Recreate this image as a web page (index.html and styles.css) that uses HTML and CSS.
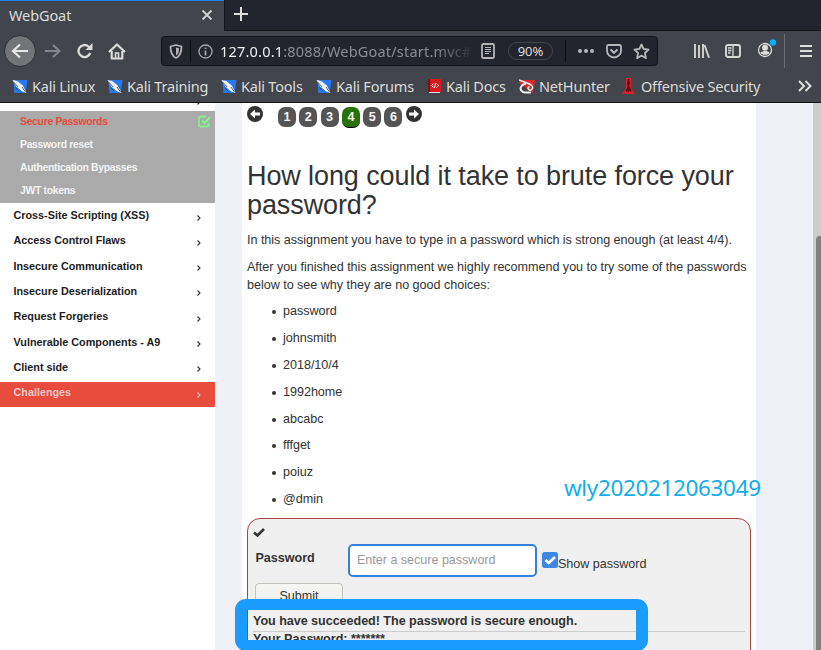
FILE: index.html
```html
<!DOCTYPE html>
<html lang="en">
<head>
<meta charset="utf-8">
<title>WebGoat</title>
<link rel="stylesheet" href="styles.css">
</head>
<body>
<svg class="defs" width="0" height="0">
  <symbol id="dragon" viewBox="0 0 16 16"><path d="M1 1H16L14 15H2Z" fill="#2878f5"/><path d="M0 1L5 2L11 7L15 15L10 13L4 8Z" fill="#f3f3f3"/><path d="M1 3L6 8.500M10 8.500L14 14M3 9L7 13" stroke="#34445c" stroke-width=".9"/></symbol>
  <symbol id="chev" viewBox="0 0 6 8"><path d="M1.500 1.500L4 4L1.500 6.500" fill="none" stroke="currentColor" stroke-width="1.100"/></symbol>
</svg>
<div class="screen">
  <header class="browser">
    <div class="tabs">
      <div class="tab"><span class="tab-title">WebGoat</span>
        <svg width="12" height="12" viewBox="0 0 12 12"><path d="M1.500 1.500L10.500 10.500M10.500 1.500L1.500 10.500" stroke="#d2d2d2" stroke-width="1.800"/></svg>
      </div>
      <div class="newtab"><svg width="14" height="14" viewBox="0 0 14 14"><path d="M7 0V14M0 7H14" stroke="#dededc" stroke-width="2"/></svg></div>
    </div>
    <div class="nav">
      <div class="back"><svg width="18" height="16" viewBox="0 0 18 16"><path d="M17 8H2M9 1.500L2 8L9 14.500" fill="none" stroke="#e6e6e4" stroke-width="2.200"/></svg></div>
      <svg class="fwd" width="18" height="16" viewBox="0 0 18 16"><path d="M1 8H15.500M9 2L15.500 8L9 14" fill="none" stroke="#85878b" stroke-width="2"/></svg>
      <svg class="reload" width="16" height="16" viewBox="0 0 16 16"><path d="M13.200 10A6 6 0 1 1 11.500 3.500L13 5" fill="none" stroke="#dcdcda" stroke-width="2.300"/><path d="M15.500 0V7H8.500Z" fill="#dcdcda"/></svg>
      <svg class="home" width="18" height="17" viewBox="0 0 18 17"><path d="M1 9L9 1.500L17 9M3.700 8V15.500H14.300V8" fill="none" stroke="#dcdcda" stroke-width="2.200" stroke-linejoin="round"/><path d="M7.500 15V10H10.500V15" fill="none" stroke="#dcdcda" stroke-width="1.600"/></svg>
      <div class="url">
        <svg class="shield" width="14" height="15" viewBox="0 0 14 15"><path d="M7 1L12.500 2.500C12.500 8 11.500 12 7 14C2.500 12 1.500 8 1.500 2.500Z" fill="none" stroke="#b5b5b8" stroke-width="1.800" stroke-linejoin="round"/><path d="M7 3.500V11.500C9.500 10 10 7 10 4.200Z" fill="#b5b5b8"/></svg>
        <i class="bar"></i>
        <svg class="info" width="15" height="15" viewBox="0 0 15 15"><circle cx="7.500" cy="7.500" r="6.500" fill="none" stroke="#a9a9ad" stroke-width="1.300"/><path d="M7.500 6.500V11.500M7.500 3.500V5" stroke="#a9a9ad" stroke-width="1.700"/></svg>
        <span class="address"><b>127.0.0.1</b>:8088/WebGoat/start.mvc#</span>
        <svg class="reader" width="14" height="16" viewBox="0 0 14 16"><rect x="1" y="1" width="12" height="14" rx="1.500" fill="none" stroke="#b6b6b8" stroke-width="1.800"/><path d="M4 4.500H10M4 6.500H10M4 8.500H10M4 10.500H8" stroke="#b6b6b8"/></svg>
        <span class="pct">90%</span>
        <i class="bar"></i>
        <svg class="dots" width="16" height="4" viewBox="0 0 16 4"><g fill="#b7b7ba"><circle cx="2" cy="2" r="2"/><circle cx="8" cy="2" r="2"/><circle cx="14" cy="2" r="2"/></g></svg>
        <svg class="pocket" width="16" height="15" viewBox="0 0 16 15"><path d="M2.500 1H13.500Q15 1 15 2.500V6.500A7 7 0 0 1 1 6.500V2.500Q1 1 2.500 1Z" fill="none" stroke="#b7b7ba" stroke-width="1.800"/><path d="M4.500 5.500L8 8.800L11.500 5.500" fill="none" stroke="#b7b7ba" stroke-width="2"/></svg>
        <svg class="star" width="17" height="17" viewBox="0 0 17 17"><path d="M8.500 1.500L10.600 6L15.600 6.600L11.900 10L12.900 15.200L8.500 12.600L4.100 15.200L5.100 10L1.400 6.600L6.400 6Z" fill="none" stroke="#b7b7ba" stroke-width="1.800" stroke-linejoin="round"/></svg>
      </div>
      <svg class="library" width="16" height="14" viewBox="0 0 16 14"><path d="M1 0V14M5 1V14M9 0V14M10.500 1L15 13.700" stroke="#d2d2d0" stroke-width="1.900" fill="none"/></svg>
      <svg class="side-ic" width="16" height="14" viewBox="0 0 16 14"><rect x="1" y="1" width="14" height="12" rx="2" fill="none" stroke="#d8d8d6" stroke-width="1.900"/><path d="M8 1V13M3 4H6.500M3 6.500H6.500M3 9H5.500" stroke="#d8d8d6" stroke-width="1.300"/></svg>
      <svg class="user" width="20" height="19" viewBox="0 0 20 19"><circle cx="8" cy="11" r="6.500" fill="none" stroke="#dcdcda" stroke-width="1.300"/><circle cx="8" cy="8.800" r="3" fill="#dcdcda"/><path d="M3.300 13.800C5 11.500 11 11.500 12.700 13.800C11 16.500 5 16.500 3.300 13.800Z" fill="#dcdcda"/><circle cx="16" cy="3.500" r="3.200" fill="#00b0fa"/></svg>
      <i class="nav-sep"></i>
      <svg width="12" height="12" viewBox="0 0 12 12"><path d="M0 1H12M0 6H12M0 11H12" stroke="#dededc" stroke-width="2"/></svg>
    </div>
    <div class="bookmarks">
      <a class="b1"><svg width="16" height="15"><use href="#dragon"/></svg><span>Kali Linux</span></a>
      <a class="b2"><svg width="16" height="15"><use href="#dragon"/></svg><span>Kali Training</span></a>
      <a class="b3"><svg width="16" height="15"><use href="#dragon"/></svg><span>Kali Tools</span></a>
      <a class="b4"><svg width="16" height="15"><use href="#dragon"/></svg><span>Kali Forums</span></a>
      <a class="b5"><svg width="13" height="16" viewBox="0 0 13 16"><path d="M0 1H13V14H0Z" fill="#d81a20"/><path d="M0 1H2V14H0Z" fill="#7b1015"/><path d="M1 14.500H12" stroke="#ddd"/><path d="M5.500 5.500L3.500 7.500L5.500 9.500M8.500 5.500L10.500 7.500L8.500 9.500M7.500 5L6.500 10" stroke="#fff" fill="none"/></svg><span>Kali Docs</span></a>
      <a class="b6"><svg width="16" height="15" viewBox="0 0 16 15"><path d="M0 1H16L14 14L0 4Z" fill="#d9242a"/><path d="M0 1L8 4C14 6 15 9 12 11C9 12 8 8 10.500 7.500" fill="none" stroke="#eee" stroke-width="1.500"/><path d="M7 4.500C1 6 0 11 4 13C7 14 9 13.500 12 13.500" fill="none" stroke="#eee" stroke-width="2"/></svg><span>NetHunter</span></a>
      <a class="b7"><svg width="14" height="16" viewBox="0 0 14 16"><path d="M4 0H9V10L13 16H0L4 10Z" fill="#d9202a"/><path d="M6.500 1V14M4 13L6.500 9L9 13M5 5H8" stroke="#570e14" stroke-width="1.700" fill="none"/></svg><span>Offensive Security</span></a>
      <svg class="more" width="14" height="12" viewBox="0 0 14 12"><path d="M1 1L6 6L1 11M7.500 1L12.500 6L7.500 11" fill="none" stroke="#dededc" stroke-width="2"/></svg>
    </div>
  </header>
  <div class="page">
    <nav class="sidebar">
      <div class="cut"><svg width="6" height="8"><use href="#chev"/></svg></div>
      <div class="sub">
        <div class="active">Secure Passwords <svg width="13" height="13" viewBox="0 0 13 13"><path d="M8 1.500H3Q1 1.500 1 3.500V9.500Q1 11.500 3 11.500H8.500Q10.500 11.500 10.500 9.500V7.500" fill="none" stroke="#7df58a" stroke-width="1.800"/><path d="M4 5.500L6.500 8L12 2" fill="none" stroke="#7df58a" stroke-width="2"/></svg></div>
        <div>Password reset</div>
        <div>Authentication Bypasses</div>
        <div>JWT tokens</div>
      </div>
      <div class="cat"><span>Cross-Site Scripting (XSS)</span><svg width="6" height="8"><use href="#chev"/></svg></div>
      <div class="cat"><span>Access Control Flaws</span><svg width="6" height="8"><use href="#chev"/></svg></div>
      <div class="cat"><span>Insecure Communication</span><svg width="6" height="8"><use href="#chev"/></svg></div>
      <div class="cat"><span>Insecure Deserialization</span><svg width="6" height="8"><use href="#chev"/></svg></div>
      <div class="cat"><span>Request Forgeries</span><svg width="6" height="8"><use href="#chev"/></svg></div>
      <div class="cat"><span>Vulnerable Components - A9</span><svg width="6" height="8"><use href="#chev"/></svg></div>
      <div class="cat"><span>Client side</span><svg width="6" height="8"><use href="#chev"/></svg></div>
      <div class="cat hot"><span>Challenges</span><svg width="6" height="8"><use href="#chev"/></svg></div>
    </nav>
    <main class="lesson">
      <div class="pager">
        <svg class="prev" width="16" height="16" viewBox="0 0 16 16"><circle cx="8" cy="8" r="8" fill="#333"/><path d="M3 8L8 3.500V6.500H13V9.500H8V12.500Z" fill="#fff"/></svg>
        <b>1</b><b>2</b><b>3</b><b class="on">4</b><b>5</b><b>6</b>
        <svg class="next" width="16" height="16" viewBox="0 0 16 16"><circle cx="8" cy="8" r="8" fill="#333"/><path d="M13 8L8 3.500V6.500H3V9.500H8V12.500Z" fill="#fff"/></svg>
      </div>
      <h1>How long could it take to brute force your<br>password?</h1>
      <p>In this assignment you have to type in a password which is strong enough (at least 4/4).</p>
      <p>After you finished this assignment we highly recommend you to try some of the passwords<br>below to see why they are no good choices:</p>
      <ul>
        <li>password</li><li>johnsmith</li><li>2018/10/4</li><li>1992home</li><li>abcabc</li><li>fffget</li><li>poiuz</li><li>@dmin</li>
      </ul>
      <section class="attack">
        <svg class="tick" width="12" height="9" viewBox="0 0 12 9"><path d="M1 4.500L4.500 7.500L11 1" fill="none" stroke="#333" stroke-width="2.600"/></svg>
        <div class="row">
          <label>Password</label>
          <div class="input">Enter a secure password</div>
          <svg class="check" width="16" height="16" viewBox="0 0 16 16"><rect width="16" height="16" rx="2.500" fill="#3c86e4"/><path d="M3.500 8L6.800 11L13 5" fill="none" stroke="#fff" stroke-width="2.600"/></svg>
          <span class="show">Show password</span>
        </div>
        <div class="submit">Submit</div>
        <div class="result">You have succeeded! The password is secure enough.</div>
        <div class="yours">Your Password: *******</div>
      </section>
    </main>
    <div class="scroll"><div class="thumb"></div></div>
  </div>
  <div class="mark"></div>
  <div class="watermark">wly2020212063049</div>
</div>
</body>
</html>
```
FILE: styles.css
```css
* { box-sizing: border-box; }
body { margin: 0; font-family: "Liberation Sans", Arial, sans-serif; color: #333; }
svg { display: block; flex: none; }
.defs { position: absolute; }
.screen { position: relative; width: 821px; height: 650px; overflow: hidden; background: #fff; }

/* Browser chrome */
.browser { height: 103px; background: #42454c; border-bottom: 1px solid #101114; font-family: "Noto Sans", sans-serif; color: #dcdcda; }
.tabs { display: flex; height: 31px; background: #23252e; }
.tab { display: flex; align-items: center; justify-content: space-between; width: 224px; padding: 0 11px 2px 9px; border-top: 1px solid #2380f8; background: #42454c; font-size: 14.500px; letter-spacing: -.1px; }
.newtab { flex: 1; display: flex; align-items: center; padding: 0 0 2px 9px; border-left: 1px solid #15161b; border-bottom: 1px solid #15161b; }
.nav { display: flex; align-items: center; height: 40px; padding-left: 4px; }
.back { display: flex; align-items: center; justify-content: center; width: 32px; height: 32px; border: 1px solid #2c2e33; border-radius: 50%; background: #727478; }
.fwd { margin-left: 8px; }
.reload { margin-left: 15px; }
.home { margin-left: 15px; }
.url { display: flex; align-items: center; width: 497px; height: 30px; margin-left: 35px; padding-left: 7px; background: #23252e; border: 1px solid #101217; border-radius: 4px; }
.bar { width: 1px; height: 22px; background: #0b0c10; }
.shield { margin-right: 7px; }
.info { margin: 0 7px; }
.address { width: 251px; overflow: hidden; white-space: nowrap; font-size: 14.500px; letter-spacing: .2px; color: #8b8c91; -webkit-mask-image: linear-gradient(90deg, #000 215px, transparent 255px); mask-image: linear-gradient(90deg, #000 215px, transparent 255px); }
.address b { font-weight: 400; color: #f0f0f0; }
.reader { margin-left: 10px; }
.pct { display: flex; align-items: center; justify-content: center; width: 45px; height: 18px; margin: 0 12px 0 13px; border: 1px solid #44464d; border-radius: 9px; font-size: 13px; }
.dots { margin-left: 12px; }
.pocket { margin-left: 12px; }
.star { margin-left: 11px; }
.library { margin-left: 36px; }
.side-ic { margin-left: 15px; }
.user { margin: -5px 0 0 16px; }
.nav-sep { width: 1px; height: 34px; margin: 0 15px 0 7px; background: #6a6c70; }
.bookmarks { display: flex; align-items: center; height: 31px; padding: 0 0 1px 12px; font-size: 14.500px; letter-spacing: -.2px; white-space: nowrap; }
.bookmarks a { display: flex; align-items: center; gap: 4px; flex: none; }
.b1 { width: 95px; }
.b2 { width: 114px; }
.b3 { width: 95px; }
.b4 { width: 112px; }
.bookmarks .b5 { width: 91px; gap: 5px; }
.b6 { width: 103px; }
.bookmarks .b7 { width: 176px; gap: 5px; }

/* Lesson page */
.page { display: flex; height: 547px; background: #f0f1f7; }
.sidebar { width: 215px; background: #fff; font-size: 10.800px; font-weight: 700; }
.cut { display: flex; justify-content: flex-end; height: 8px; padding-right: 13px; overflow: hidden; }
.cut svg { margin-top: -5px; color: #333; }
.sub { height: 92px; background: #aaa; color: #f4f4f4; font-size: 10.400px; letter-spacing: -.3px; }
.sub div { display: flex; justify-content: space-between; height: 23px; padding: 0 4px 2px 20px; align-items: center; }
.sub .active { color: #e74c3c; }
.cat { display: flex; justify-content: space-between; height: 25.330px; padding: 0 13px 0 13.500px; color: #1d1d1d; line-height: 24px; }
.cat svg { margin-top: 10.500px; color: #333; }
.cat.hot { height: 25px; margin-top: 1.500px; background: #e74c3c; color: #ecc9c7; line-height: 21px; }
.cat.hot svg { margin-top: 9px; color: #ecc9c7; }
.lesson { width: 514px; margin-left: 27px; padding: 0 5px; background: #fff; font-size: 12.600px; letter-spacing: -.035px; line-height: 18px; white-space: nowrap; overflow: hidden; }
.pager { display: flex; height: 59px; padding-top: 4px; }
.pager b { width: 18px; height: 20px; margin-right: 3.300px; border-radius: 7px; background: #555; color: #f4f4f4; font-size: 12.600px; line-height: 20px; text-align: center; }
.pager .on { height: 21px; background: #267309; border-bottom: 1px solid #000; }
.prev { margin: -1px 15px 0 0; }
.next { margin-top: -1px; }
h1 { margin: 0 0 11px; font-size: 27px; font-weight: 400; line-height: 29px; letter-spacing: -.1px; }
p { margin: 0 0 9px; }
ul { margin: -1px 0 0; padding-left: 25px; list-style: none; }
li { display: flex; height: 26.900px; }
li::before { content: ""; width: 4px; height: 4px; margin: 8px 7px 0 0; border-radius: 50%; background: #333; }
.attack { height: 160px; margin-top: 1px; border: 1px solid #a94442; border-radius: 13px; background: #f0f0f0; }
.tick { margin: 9px 0 0 5px; }
.row { display: flex; height: 46px; padding-left: 7.500px; }
.row label { width: 92.500px; padding-top: 12px; font-weight: 700; }
.input { width: 189px; height: 33px; margin-top: 7px; padding: 5px 7px; border: 2px solid #357fdf; border-radius: 5px; background: #fff; color: #999; }
.check { margin: 15px 0 0 5px; }
.show { padding-top: 18px; }
.submit { width: 88px; height: 27px; margin: 0 0 0 7px; border: 1px solid #c5c1bd; border-radius: 4px; background: linear-gradient(#f6f6f4, #ededeb); text-align: center; line-height: 24px; }
.result { height: 21px; margin: 1px 5px 0; padding-top: 1px; border-bottom: 1px solid #ccc; font-weight: 700; letter-spacing: -.05px; }
.yours { margin: 0 5px; line-height: 15px; font-weight: 700; }
.scroll { width: 8px; margin-left: auto; padding: 133px 0 0 3px; background: #cdcdcb; }
.thumb { height: 430px; border-radius: 4px 0 0; background: #7f8280; }

/* Annotations drawn over the page */
.mark { position: absolute; left: 235px; top: 599px; width: 413px; height: 52px; border: solid #1a9bfe; border-width: 11px 12px 11px 12px; border-radius: 11px; }
.watermark { position: absolute; left: 564px; top: 472px; color: #11aeed; font: 22.500px/32px "Noto Sans", "Open Sans", sans-serif; letter-spacing: -.35px; }
```
